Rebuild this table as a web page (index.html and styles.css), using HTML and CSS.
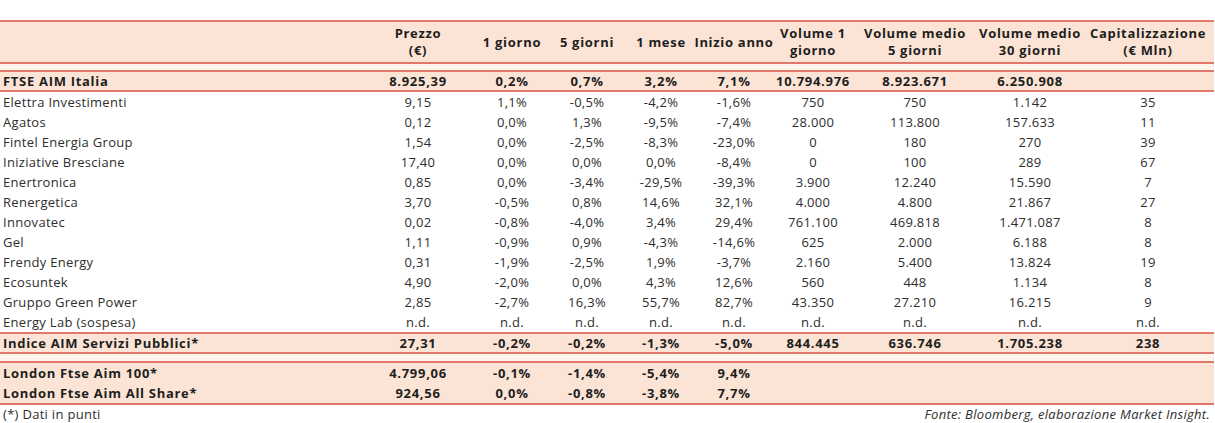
FILE: index.html
```html
<!DOCTYPE html>
<html lang="it">
<head>
<meta charset="utf-8">
<title>AIM Servizi Pubblici</title>
<link rel="stylesheet" href="styles.css">
</head>
<body>
<div class="sheet">
  <div class="row head">
    <div class="name"></div>
    <div class="c">Prezzo<br>(€)</div>
    <div class="c">1 giorno</div>
    <div class="c">5 giorni</div>
    <div class="c">1 mese</div>
    <div class="c">Inizio anno</div>
    <div class="c">Volume 1<br>giorno</div>
    <div class="c">Volume medio<br>5 giorni</div>
    <div class="c">Volume medio<br>30 giorni</div>
    <div class="c">Capitalizzazione<br>(€ Mln)</div>
  </div>
  <div class="spacer"></div>
  <div class="band">
    <div class="row bold short">
      <div class="name">FTSE AIM Italia</div>
      <div class="c">8.925,39</div><div class="c">0,2%</div><div class="c">0,7%</div><div class="c">3,2%</div><div class="c">7,1%</div><div class="c">10.794.976</div><div class="c">8.923.671</div><div class="c">6.250.908</div><div class="c"></div>
    </div>
  </div>
  <div class="body">
    <div class="row"><div class="name">Elettra Investimenti</div><div class="c">9,15</div><div class="c">1,1%</div><div class="c">-0,5%</div><div class="c">-4,2%</div><div class="c">-1,6%</div><div class="c">750</div><div class="c">750</div><div class="c">1.142</div><div class="c">35</div></div>
    <div class="row"><div class="name">Agatos</div><div class="c">0,12</div><div class="c">0,0%</div><div class="c">1,3%</div><div class="c">-9,5%</div><div class="c">-7,4%</div><div class="c">28.000</div><div class="c">113.800</div><div class="c">157.633</div><div class="c">11</div></div>
    <div class="row"><div class="name">Fintel Energia Group</div><div class="c">1,54</div><div class="c">0,0%</div><div class="c">-2,5%</div><div class="c">-8,3%</div><div class="c">-23,0%</div><div class="c">0</div><div class="c">180</div><div class="c">270</div><div class="c">39</div></div>
    <div class="row"><div class="name">Iniziative Bresciane</div><div class="c">17,40</div><div class="c">0,0%</div><div class="c">0,0%</div><div class="c">0,0%</div><div class="c">-8,4%</div><div class="c">0</div><div class="c">100</div><div class="c">289</div><div class="c">67</div></div>
    <div class="row"><div class="name">Enertronica</div><div class="c">0,85</div><div class="c">0,0%</div><div class="c">-3,4%</div><div class="c">-29,5%</div><div class="c">-39,3%</div><div class="c">3.900</div><div class="c">12.240</div><div class="c">15.590</div><div class="c">7</div></div>
    <div class="row"><div class="name">Renergetica</div><div class="c">3,70</div><div class="c">-0,5%</div><div class="c">0,8%</div><div class="c">14,6%</div><div class="c">32,1%</div><div class="c">4.000</div><div class="c">4.800</div><div class="c">21.867</div><div class="c">27</div></div>
    <div class="row"><div class="name">Innovatec</div><div class="c">0,02</div><div class="c">-0,8%</div><div class="c">-4,0%</div><div class="c">3,4%</div><div class="c">29,4%</div><div class="c">761.100</div><div class="c">469.818</div><div class="c">1.471.087</div><div class="c">8</div></div>
    <div class="row"><div class="name">Gel</div><div class="c">1,11</div><div class="c">-0,9%</div><div class="c">0,9%</div><div class="c">-4,3%</div><div class="c">-14,6%</div><div class="c">625</div><div class="c">2.000</div><div class="c">6.188</div><div class="c">8</div></div>
    <div class="row"><div class="name">Frendy Energy</div><div class="c">0,31</div><div class="c">-1,9%</div><div class="c">-2,5%</div><div class="c">1,9%</div><div class="c">-3,7%</div><div class="c">2.160</div><div class="c">5.400</div><div class="c">13.824</div><div class="c">19</div></div>
    <div class="row"><div class="name">Ecosuntek</div><div class="c">4,90</div><div class="c">-2,0%</div><div class="c">0,0%</div><div class="c">4,3%</div><div class="c">12,6%</div><div class="c">560</div><div class="c">448</div><div class="c">1.134</div><div class="c">8</div></div>
    <div class="row"><div class="name">Gruppo Green Power</div><div class="c">2,85</div><div class="c">-2,7%</div><div class="c">16,3%</div><div class="c">55,7%</div><div class="c">82,7%</div><div class="c">43.350</div><div class="c">27.210</div><div class="c">16.215</div><div class="c">9</div></div>
    <div class="row"><div class="name">Energy Lab (sospesa)</div><div class="c">n.d.</div><div class="c">n.d.</div><div class="c">n.d.</div><div class="c">n.d.</div><div class="c">n.d.</div><div class="c">n.d.</div><div class="c">n.d.</div><div class="c">n.d.</div><div class="c">n.d.</div></div>
  </div>
  <div class="band">
    <div class="row bold short">
      <div class="name">Indice AIM Servizi Pubblici*</div>
      <div class="c">27,31</div><div class="c">-0,2%</div><div class="c">-0,2%</div><div class="c">-1,3%</div><div class="c">-5,0%</div><div class="c">844.445</div><div class="c">636.746</div><div class="c">1.705.238</div><div class="c">238</div>
    </div>
  </div>
  <div class="spacer tall"></div>
  <div class="band">
    <div class="row bold">
      <div class="name">London Ftse Aim 100*</div>
      <div class="c">4.799,06</div><div class="c">-0,1%</div><div class="c">-1,4%</div><div class="c">-5,4%</div><div class="c">9,4%</div><div class="c"></div><div class="c"></div><div class="c"></div><div class="c"></div>
    </div>
    <div class="row bold">
      <div class="name">London Ftse Aim All Share*</div>
      <div class="c">924,56</div><div class="c">0,0%</div><div class="c">-0,8%</div><div class="c">-3,8%</div><div class="c">7,7%</div><div class="c"></div><div class="c"></div><div class="c"></div><div class="c"></div>
    </div>
  </div>
  <div class="foot">
    <span class="note">(*) Dati in punti</span>
    <span class="source">Fonte: Bloomberg, elaborazione Market Insight.</span>
  </div>
</div>
</body>
</html>
```
FILE: styles.css
```css
html, body {
  margin: 0;
  padding: 0;
  background: #ffffff;
}

body {
  font-family: "Open Sans", "DejaVu Sans", sans-serif;
  font-size: 13px;
  color: #2e2e2e;
  letter-spacing: 0.3px;
}

.sheet {
  width: 1214px;
  padding-top: 20px;
}

.row {
  display: grid;
  grid-template-columns: 358px 120px 68px 82px 66px 80px 78px 126px 104px 132px;
  align-items: center;
  height: 20px;
  line-height: 16px;
  white-space: nowrap;
}

.row .name {
  padding-left: 3px;
}

.row .c {
  display: flex;
  justify-content: center;
  text-align: center;
}

.head {
  height: 40px;
  background: #fbe4d5;
  border-top: 2px solid #e0776a;
  border-bottom: 2px solid #e0776a;
  font-weight: 700;
  color: #1e1e1e;
  line-height: 17px;
  letter-spacing: 0.7px;
}

.head .c {
  display: block;
}

.spacer {
  height: 6px;
  background: #fdf2ec;
}

.spacer.tall {
  height: 7px;
}

.band {
  background: #fbe4d5;
  border-top: 2px solid #e0776a;
  border-bottom: 2px solid #e0776a;
}

.bold {
  font-weight: 700;
  color: #1e1e1e;
  letter-spacing: 0.7px;
}

.row.short {
  height: 18px;
}

.foot {
  display: flex;
  justify-content: space-between;
  align-items: center;
  height: 17px;
  line-height: 16px;
  padding: 0 4px 0 3px;
}

.source {
  font-style: italic;
}
```
